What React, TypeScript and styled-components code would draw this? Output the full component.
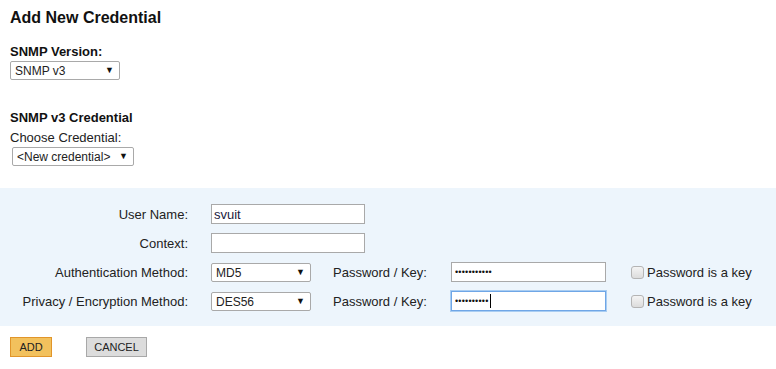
import React from 'react';
import styled, { createGlobalStyle } from 'styled-components';

const GlobalStyle = createGlobalStyle`
  html, body {
    margin: 0;
    padding: 0;
    background: #ffffff;
  }
  body {
    font-family: 'Liberation Sans', Arial, sans-serif;
    font-size: 13px;
    color: #222;
  }
`;

const App: React.FunctionComponent = () => {
  return (
    <>
      <GlobalStyle />
      <Page>
        <Top>
          <Title>Add New Credential</Title>
          <Label>SNMP Version:</Label>
          <SelectWrap width={110}>
            <Select defaultValue="v3">
              <option value="v3">SNMP v3</option>
            </Select>
          </SelectWrap>
          <SubTitle>SNMP v3 Credential</SubTitle>
          <Plain>Choose Credential:</Plain>
          <SelectWrap width={122} offset={2}>
            <Select defaultValue="new">
              <option value="new">&lt;New credential&gt;</option>
            </Select>
          </SelectWrap>
        </Top>

        <Panel>
          <FormGrid>
            <RowLabel>User Name:</RowLabel>
            <TextInput type="text" defaultValue="svuit" />

            <RowLabel>Context:</RowLabel>
            <TextInput type="text" defaultValue="" />

            {rows.map((row) => (
              <React.Fragment key={row.label}>
                <RowLabel>{row.label}</RowLabel>
                <SelectWrap width={100}>
                  <Select defaultValue={row.method}>
                    <option value={row.method}>{row.method}</option>
                  </Select>
                </SelectWrap>
                <PwLabel>Password / Key:</PwLabel>
                <PwField>
                  <PwInput type="password" defaultValue={row.secret} focused={row.focused} />
                  {row.focused && <Caret />}
                </PwField>
                <CheckLabel>
                  <Check />
                  Password is a key
                </CheckLabel>
              </React.Fragment>
            ))}
          </FormGrid>
        </Panel>

        <Actions>
          <Button variant="primary">ADD</Button>
          <Button>CANCEL</Button>
        </Actions>
      </Page>
    </>
  );
};

export default App;

const rows = [
  { label: 'Authentication Method:', method: 'MD5', secret: 'xxxxxxxxxxx', focused: false },
  { label: 'Privacy / Encryption Method:', method: 'DES56', secret: 'xxxxxxxxxx', focused: true },
];

const Page = styled.div`
  width: 776px;
  min-height: 369px;
  display: flex;
  flex-direction: column;
`;

const Top = styled.div`
  display: flex;
  flex-direction: column;
  align-items: flex-start;
  padding: 8px 10px 0;
`;

const Title = styled.h2`
  margin: 0 0 16px;
  font-size: 16px;
  font-weight: bold;
  color: #111;
  line-height: 20px;
`;

const Label = styled.div`
  font-weight: bold;
  font-size: 13px;
  line-height: 16px;
  color: #111;
`;

const SubTitle = styled(Label)`
  margin-top: 30px;
  margin-bottom: 4px;
`;

const Plain = styled.div`
  font-size: 13px;
  line-height: 16px;
  color: #222;
`;

const SelectWrap = styled.div<{ width: number; offset?: number }>`
  position: relative;
  width: ${(p) => p.width}px;
  height: 19px;
  margin-left: ${(p) => p.offset || 0}px;
  margin-top: 1px;

  &::after {
    content: '▼';
    position: absolute;
    right: 6px;
    top: 4px;
    font-size: 9px;
    line-height: 11px;
    color: #111;
    pointer-events: none;
  }
`;

const Select = styled.select`
  appearance: none;
  -webkit-appearance: none;
  width: 100%;
  height: 100%;
  box-sizing: border-box;
  border: 1px solid #a9a9a9;
  border-radius: 2px;
  background: #fff;
  font-family: 'Liberation Sans', Arial, sans-serif;
  font-size: 12px;
  color: #222;
  padding: 0 0 0 4px;
  margin: 0;
  outline: none;
`;

const Panel = styled.div`
  margin-top: 22px;
  background: #edf5fc;
  padding: 16px 0 15px;
`;

const FormGrid = styled.div`
  display: grid;
  grid-template-columns: 211px 122px 118px 180px auto;
  grid-auto-rows: 20px;
  row-gap: 9px;
  align-items: center;
`;

const RowLabel = styled.div`
  grid-column: 1;
  text-align: right;
  padding-right: 23px;
  font-size: 13px;
  color: #222;
`;

const TextInput = styled.input`
  grid-column: 2 / span 3;
  width: 154px;
  height: 20px;
  box-sizing: border-box;
  border: 1px solid #a9a9a9;
  background: #fff;
  font-family: 'Liberation Sans', Arial, sans-serif;
  font-size: 13px;
  color: #1a1a40;
  padding: 0 2px;
  margin: 0;
  outline: none;
`;

const PwLabel = styled.div`
  font-size: 13px;
  color: #222;
`;

const PwField = styled.div`
  position: relative;
  width: 155px;
  height: 20px;
`;

const PwInput = styled.input<{ focused?: boolean }>`
  width: 100%;
  height: 100%;
  box-sizing: border-box;
  border: 1px solid ${(p) => (p.focused ? '#6fa6e6' : '#a9a9a9')};
  box-shadow: ${(p) => (p.focused ? '0 0 0 1px #a9cdf2' : 'none')};
  background: #fff;
  font-family: 'Liberation Sans', Arial, sans-serif;
  font-size: 9px;
  letter-spacing: 0.2px;
  color: #111;
  padding: 0 3px;
  margin: 0;
  outline: none;
`;

const Caret = styled.span`
  position: absolute;
  left: 39px;
  top: 3px;
  width: 1px;
  height: 14px;
  background: #000;
`;

const CheckLabel = styled.label`
  display: flex;
  align-items: center;
  gap: 3px;
  font-size: 13px;
  color: #222;
`;

const Check = styled.span`
  display: inline-block;
  width: 11px;
  height: 11px;
  border: 1px solid #b4b4b4;
  border-radius: 3px;
  background: linear-gradient(#f4f4f4, #dcdcdc);
`;

const Actions = styled.div`
  display: flex;
  gap: 34px;
  padding: 11px 10px 0;
`;

const Button = styled.button<{ variant?: 'primary' }>`
  height: 20px;
  box-sizing: border-box;
  padding: 0;
  width: ${(p) => (p.variant === 'primary' ? '42px' : '61px')};
  border: 1px solid ${(p) => (p.variant === 'primary' ? '#e1952a' : '#a8a8a8')};
  background: ${(p) => (p.variant === 'primary' ? '#f2c15d' : '#dcdcdc')};
  font-family: 'Liberation Sans', Arial, sans-serif;
  font-size: 11px;
  color: #222;
  cursor: pointer;
`;
